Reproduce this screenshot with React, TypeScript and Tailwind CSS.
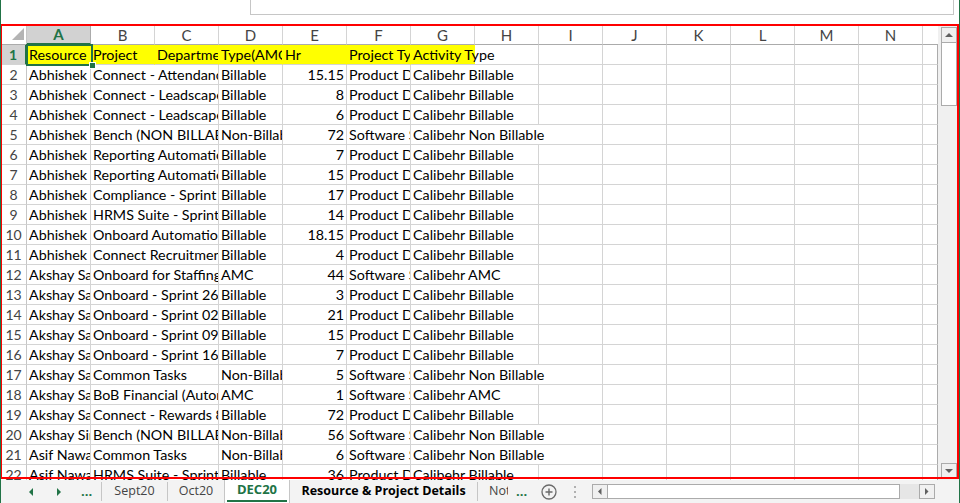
import React from 'react';

const GREEN = '#217346';
const COLS = ['A', 'B', 'C', 'D', 'E', 'F', 'G', 'H', 'I', 'J', 'K', 'L', 'M', 'N'];

type Row = [string, string, string, string, string, string];

const DATA: Row[] = [
  ['Abhishek', 'Connect - Attendance', 'Billable', '15.15', 'Product Development', 'Calibehr Billable'],
  ['Abhishek', 'Connect - Leadscape', 'Billable', '8', 'Product Development', 'Calibehr Billable'],
  ['Abhishek', 'Connect - Leadscape', 'Billable', '6', 'Product Development', 'Calibehr Billable'],
  ['Abhishek', 'Bench (NON BILLABLE)', 'Non-Billable', '72', 'Software Services', 'Calibehr Non Billable'],
  ['Abhishek', 'Reporting Automation', 'Billable', '7', 'Product Development', 'Calibehr Billable'],
  ['Abhishek', 'Reporting Automation', 'Billable', '15', 'Product Development', 'Calibehr Billable'],
  ['Abhishek', 'Compliance - Sprint 1', 'Billable', '17', 'Product Development', 'Calibehr Billable'],
  ['Abhishek', 'HRMS Suite - Sprint 1', 'Billable', '14', 'Product Development', 'Calibehr Billable'],
  ['Abhishek', 'Onboard Automation', 'Billable', '18.15', 'Product Development', 'Calibehr Billable'],
  ['Abhishek', 'Connect Recruitment', 'Billable', '4', 'Product Development', 'Calibehr Billable'],
  ['Akshay Sawant', 'Onboard for Staffing', 'AMC', '44', 'Software Services', 'Calibehr AMC'],
  ['Akshay Sawant', 'Onboard - Sprint 26 - UI', 'Billable', '3', 'Product Development', 'Calibehr Billable'],
  ['Akshay Sawant', 'Onboard - Sprint 02 - UI', 'Billable', '21', 'Product Development', 'Calibehr Billable'],
  ['Akshay Sawant', 'Onboard - Sprint 09 - UI', 'Billable', '15', 'Product Development', 'Calibehr Billable'],
  ['Akshay Sawant', 'Onboard - Sprint 16 - UI', 'Billable', '7', 'Product Development', 'Calibehr Billable'],
  ['Akshay Sawant', 'Common Tasks', 'Non-Billable', '5', 'Software Services', 'Calibehr Non Billable'],
  ['Akshay Sawant', 'BoB Financial (Automation)', 'AMC', '1', 'Software Services', 'Calibehr AMC'],
  ['Akshay Sawant', 'Connect - Rewards 8', 'Billable', '72', 'Product Development', 'Calibehr Billable'],
  ['Akshay Singh', 'Bench (NON BILLABLE)', 'Non-Billable', '56', 'Software Services', 'Calibehr Non Billable'],
  ['Asif Nawaz', 'Common Tasks', 'Non-Billable', '6', 'Software Services', 'Calibehr Non Billable'],
  ['Asif Nawaz', 'HRMS Suite - Sprint 3', 'Billable', '36', 'Product Development', 'Calibehr Billable'],
];

const cellFont = { fontFamily: 'Lato, "Liberation Sans", sans-serif' };

function Cell({ w, text, right, yellow, last }: { w: number; text?: string; right?: boolean; yellow?: boolean; last?: boolean }) {
  return (
    <div
      className={
        'h-full shrink-0 overflow-hidden whitespace-nowrap border-b border-b-[#d4d4d4] flex items-center text-[14.3px] leading-none text-black px-[2px] pt-[1px] ' +
        (right ? 'justify-end ' : '') +
        (yellow ? 'bg-[#ffff00] border-r border-r-[#ffff00] ' : last ? 'border-r border-r-[#ababab] ' : 'border-r border-r-[#d4d4d4] ')
      }
      style={{ width: w }}
    >
      {text}
    </div>
  );
}

function RowNum({ n, active }: { n: number; active?: boolean }) {
  return (
    <div
      className={
        'h-full w-[26px] shrink-0 flex items-center justify-center text-[14px] leading-none pt-[1px] border-b border-b-[#d4d4d4] ' +
        (active
          ? 'bg-[#d2d2d2] text-[#217346] font-bold border-r-2 border-r-[#217346]'
          : 'bg-white text-[#444] border-r border-r-[#c6c6c6]')
      }
    >
      {n}
    </div>
  );
}

function DataRow({ n, r }: { n: number; r: Row }) {
  const gSpan = r[5].includes('Non') ? 3 : 2;
  const rest = 14 - 6 - gSpan;
  return (
    <div className="flex h-[20px] shrink-0">
      <RowNum n={n} />
      <Cell w={64} text={r[0]} />
      <Cell w={128} text={r[1]} />
      <Cell w={64} text={r[2]} />
      <Cell w={64} text={r[3]} right />
      <Cell w={64} text={r[4]} />
      <Cell w={64 * gSpan} text={r[5]} />
      {Array.from({ length: rest }).map((_, i) => (
        <Cell key={i} w={64} />
      ))}
      <Cell w={15} last />
    </div>
  );
}

function Tri({ dir, color = '#606060', size = 4 }: { dir: 'up' | 'down' | 'left' | 'right'; color?: string; size?: number }) {
  const s = size;
  const pts =
    dir === 'up'
      ? `0,${s} ${s},0 ${2 * s},${s}`
      : dir === 'down'
      ? `0,0 ${2 * s},0 ${s},${s}`
      : dir === 'left'
      ? `${s},0 ${s},${2 * s} 0,${s}`
      : `0,0 0,${2 * s} ${s},${s}`;
  const w = dir === 'up' || dir === 'down' ? 2 * s : s;
  const h = dir === 'up' || dir === 'down' ? s : 2 * s;
  return (
    <svg width={w} height={h} viewBox={`0 0 ${w} ${h}`}>
      <polygon points={pts} fill={color} />
    </svg>
  );
}

export default function App() {
  const tabFont = { fontFamily: '"Open Sans", "Noto Sans", sans-serif' };
  return (
    <div className="w-[960px] h-[503px] overflow-hidden bg-white flex flex-col border-l border-r border-[#217346] relative" style={cellFont}>
      {/* top area */}
      <div className="h-[25px] shrink-0 bg-white">
        <div className="ml-[249px] w-[704px] h-[15px] border-l border-r border-b border-[#c6c6c6] bg-white" />
      </div>

      {/* sheet */}
      <div className="h-[455px] shrink-0 flex overflow-hidden">
        <div className="w-[937px] shrink-0 flex flex-col overflow-hidden relative">
          {/* column header */}
          <div className="flex h-[20px] shrink-0">
            <div className="w-[26px] h-full shrink-0 border-r border-r-[#c6c6c6] border-b border-b-[#ababab] bg-white flex items-end justify-end pr-[2px] pb-[4px]">
              <svg width="12" height="12" viewBox="0 0 12 12">
                <polygon points="12,0 12,12 0,12" fill="#b4b4b4" />
              </svg>
            </div>
            {COLS.map((c, i) => (
              <div
                key={c}
                className={
                  'w-[64px] h-full shrink-0 flex items-center justify-center text-[15px] leading-none pt-[1px] border-r ' +
                  (i === 0
                    ? 'bg-[#d2d2d2] text-[#217346] font-bold border-r-[#ababab] border-b-2 border-b-[#217346]'
                    : 'bg-white text-[#444] border-r-[#d4d4d4] border-b border-b-[#ababab]')
                }
              >
                {c}
              </div>
            ))}
            <div className="w-[15px] h-full shrink-0 bg-white border-b border-b-[#ababab]" />
          </div>

          {/* row 1 */}
          <div className="flex h-[20px] shrink-0">
            <RowNum n={1} active />
            <Cell w={64} text="Resource" yellow />
            <Cell w={64} text="Project" yellow />
            <Cell w={64} text="Department" yellow />
            <Cell w={64} text="Type(AMC/Billable)" yellow />
            <Cell w={64} text="Hr" yellow />
            <Cell w={64} text="Project Type" yellow />
            <div className="h-full w-[128px] shrink-0 whitespace-nowrap border-b border-b-[#d4d4d4] border-r border-r-[#d4d4d4] flex items-center text-[14.3px] leading-none text-black px-[2px] pt-[1px] bg-[linear-gradient(to_right,#ffff00_64px,transparent_64px)]">
              Activity Type
            </div>
            {Array.from({ length: 6 }).map((_, i) => (
              <Cell key={i} w={64} />
            ))}
            <Cell w={15} last />
          </div>

          {DATA.map((r, i) => (
            <DataRow key={i} n={i + 2} r={r} />
          ))}

          {/* selection A1 */}
          <div className="absolute left-[25px] top-[19px] w-[67px] h-[22px] border-2 border-[#217346] pointer-events-none" />
          <div className="absolute left-[88px] top-[37px] w-[7px] h-[7px] bg-[#217346] border border-white pointer-events-none" />
        </div>

        {/* vertical scrollbar */}
        <div className="w-[21px] shrink-0 bg-[#f0f0f0] flex flex-col pl-[3px] pr-[2px] pt-[2px] pb-[2px]">
          <div className="h-[16px] shrink-0 bg-[#f0f0f0] border border-[#ababab] flex items-center justify-center">
            <Tri dir="up" size={4} />
          </div>
          <div className="h-[63px] shrink-0 bg-white border border-t-0 border-[#ababab]" />
          <div className="flex-1" />
          <div className="h-[15px] shrink-0 bg-[#f0f0f0] border border-[#ababab] flex items-center justify-center">
            <Tri dir="down" size={4} />
          </div>
        </div>
      </div>

      {/* tab bar */}
      <div className="h-[23px] shrink-0 bg-[#f3f3f3] flex items-stretch text-[12.5px] text-[#444]" style={tabFont}>
        <div className="w-[28px] shrink-0" />
        <div className="w-[28px] shrink-0 flex items-center">
          <Tri dir="left" color={GREEN} size={4} />
        </div>
        <div className="w-[24px] shrink-0 flex items-center">
          <Tri dir="right" color={GREEN} size={4} />
        </div>
        <div className="w-[20px] shrink-0 flex items-end pb-[5px] text-[#217346] font-bold leading-none text-[13px]">...</div>
        <div className="w-[1px] my-[2px] bg-[#c6c6c6] shrink-0" />
        <div className="w-[65px] shrink-0 flex items-center justify-center">Sept20</div>
        <div className="w-[1px] my-[2px] bg-[#c6c6c6] shrink-0" />
        <div className="w-[56px] shrink-0 flex items-center justify-center">Oct20</div>
        <div className="w-[66px] shrink-0 bg-white border-l border-r border-[#c6c6c6] flex flex-col">
          <div className="flex-1 flex items-center justify-center font-bold text-[#217346] text-[13px]">DEC20</div>
          <div className="h-[2px] mx-[2px] mb-[1px] bg-[#217346]" />
        </div>
        <div className="w-[187px] shrink-0 flex items-center justify-center font-bold text-black text-[12.5px]">Resource &amp; Project Details</div>
        <div className="w-[1px] my-[2px] bg-[#c6c6c6] shrink-0" />
        <div className="w-[31px] shrink-0 flex items-center pl-[11px] overflow-hidden whitespace-nowrap">
          <span className="block w-[19px] overflow-hidden">Notes</span>
        </div>
        <div className="w-[20px] shrink-0 flex items-end pb-[5px] pl-[7px] text-[#217346] font-bold leading-none text-[13px]">...</div>
        <div className="w-[40px] shrink-0 flex items-center justify-center">
          <svg width="16" height="16" viewBox="0 0 16 16">
            <circle cx="8" cy="8" r="7" fill="none" stroke="#6a6a6a" strokeWidth="1.3" />
            <path d="M8 4.5v7M4.5 8h7" stroke="#6a6a6a" strokeWidth="1.4" />
          </svg>
        </div>
        <div className="w-[12px] shrink-0 flex flex-col items-center justify-center gap-[3px]">
          <div className="w-[2px] h-[2px] bg-[#b0b0b0]" />
          <div className="w-[2px] h-[2px] bg-[#b0b0b0]" />
          <div className="w-[2px] h-[2px] bg-[#b0b0b0]" />
        </div>
        <div className="w-[11px] shrink-0" />
        {/* horizontal scrollbar */}
        <div className="w-[343px] shrink-0 flex items-center">
          <div className="h-[15px] w-full flex">
            <div className="w-[16px] h-full border border-[#ababab] bg-[#f0f0f0] flex items-center justify-center">
              <Tri dir="left" size={3.5} />
            </div>
            <div className="w-[292px] h-full border border-l-0 border-[#ababab] bg-white" />
            <div className="flex-1 h-full bg-[#e6e6e6]" />
            <div className="w-[16px] h-full border border-[#ababab] bg-[#f0f0f0] flex items-center justify-center">
              <Tri dir="right" size={3.5} />
            </div>
          </div>
        </div>
      </div>

      {/* red annotation frame */}
      <div className="absolute left-[-1px] top-[24px] w-[960px] h-[455px] border-2 border-r-[3px] border-[#ff0000] pointer-events-none" />
    </div>
  );
}
